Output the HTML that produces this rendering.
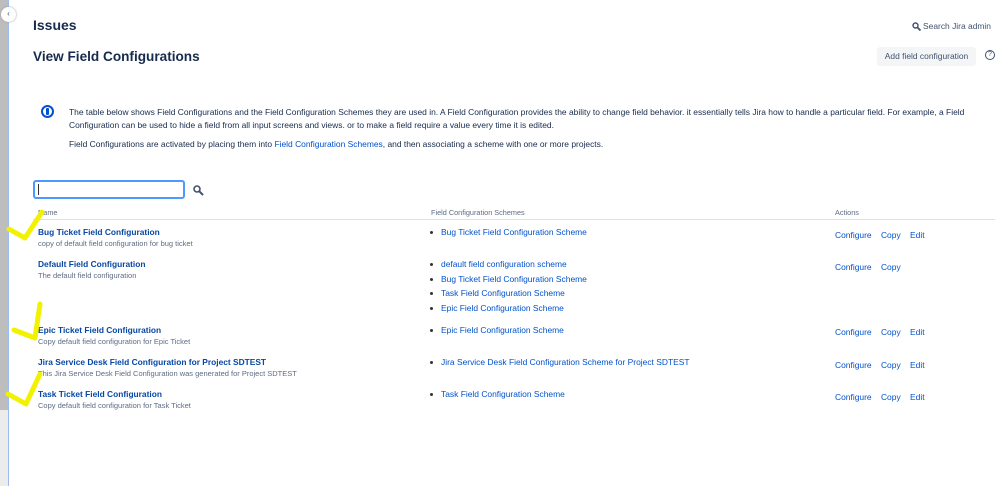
<!DOCTYPE html>
<html><head><meta charset="utf-8"><style>
*{margin:0;padding:0;box-sizing:border-box}
body{width:999px;height:486px;overflow:hidden;background:#fff;font-family:"Liberation Sans",sans-serif;color:#172b4d;position:relative}
.a{position:absolute;white-space:nowrap}
.l{color:#0052cc}
.s{font-size:8.45px}
.b{font-weight:bold;font-size:8.4px;color:#0747a6}
.d{font-size:7.5px;color:#5e6c84}
.h{font-size:7.3px;color:#5e6c84}
.bul{font-size:8.45px;color:#0052cc}
.bul:before{content:"";position:absolute;left:-11px;top:4px;width:3px;height:3px;border-radius:50%;background:#333}
</style></head><body>
<div class="a" style="left:0;top:0;width:8px;height:410px;background:#bdbdbd"></div>
<div class="a" style="left:0;top:410px;width:8px;height:76px;background:#ececec"></div>
<div class="a" style="left:8px;top:0;width:1px;height:486px;background:#9bbcf0"></div>
<div class="a" style="left:1px;top:7px;width:15px;height:15px;border-radius:50%;background:#fff;box-shadow:0 0 2px #999;font-size:8px;text-align:center;line-height:14px;color:#42526e">‹</div>
<div class="a" style="left:33px;top:17px;font-size:14px;font-weight:bold">Issues</div>
<div class="a" style="left:33px;top:49px;font-size:13.6px;font-weight:bold">View Field Configurations</div>
<svg class="a" style="left:912px;top:22px" width="9" height="9"><circle cx="3.5" cy="3.5" r="2.5" fill="none" stroke="#42526e" stroke-width="1.4"/><line x1="5.5" y1="5.5" x2="8.5" y2="8.5" stroke="#42526e" stroke-width="1.8"/></svg>
<div class="a" style="left:923px;top:21px;font-size:8.45px;color:#42526e">Search Jira admin</div>
<div class="a" style="left:877px;top:47px;width:99px;height:19px;background:#f4f5f7;border-radius:3px;font-size:8.45px;color:#42526e;text-align:center;line-height:19px">Add field configuration</div>
<div class="a" style="left:985px;top:50px;width:10px;height:10px;border:1px solid #42526e;border-radius:50%;font-size:7px;text-align:center;line-height:8px;color:#42526e">?</div>
<div class="a" style="left:41px;top:105px;width:13px;height:13px;border:2px solid #0052cc;border-radius:50%"></div>
<div class="a" style="left:46px;top:108px;width:3px;height:7px;background:#0052cc;border-radius:1px"></div>
<div class="a s" style="left:69px;top:107px">The table below shows Field Configurations and the Field Configuration Schemes they are used in. A Field Configuration provides the ability to change field behavior. it essentially tells Jira how to handle a particular field. For example, a Field</div>
<div class="a s" style="left:69px;top:120px">Configuration can be used to hide a field from all input screens and views. or to make a field require a value every time it is edited.</div>
<div class="a s" style="left:69px;top:139px">Field Configurations are activated by placing them into <span class="l">Field Configuration Schemes</span>, and then associating a scheme with one or more projects.</div>
<div class="a" style="left:33px;top:180px;width:152px;height:19px;border:2px solid #4c9aff;border-radius:3px"></div>
<div class="a" style="left:38px;top:184px;width:1px;height:11px;background:#333"></div>
<svg class="a" style="left:193px;top:185px" width="11" height="11"><circle cx="4" cy="4" r="3" fill="none" stroke="#42526e" stroke-width="1.6"/><line x1="6.3" y1="6.3" x2="10" y2="10" stroke="#42526e" stroke-width="2"/></svg>
<div class="a h" style="left:38px;top:208px">Name</div>
<div class="a h" style="left:431px;top:208px">Field Configuration Schemes</div>
<div class="a h" style="left:835px;top:208px">Actions</div>
<div class="a" style="left:33px;top:219px;width:962px;height:1px;background:#dfe1e6"></div>
<div class="a b" style="left:38px;top:227px">Bug Ticket Field Configuration</div>
<div class="a d" style="left:38px;top:239px">copy of default field configuration for bug ticket</div>
<div class="a b" style="left:38px;top:259px">Default Field Configuration</div>
<div class="a d" style="left:38px;top:271px">The default field configuration</div>
<div class="a b" style="left:38px;top:325px">Epic Ticket Field Configuration</div>
<div class="a d" style="left:38px;top:337px">Copy default field configuration for Epic Ticket</div>
<div class="a b" style="left:38px;top:357px">Jira Service Desk Field Configuration for Project SDTEST</div>
<div class="a d" style="left:38px;top:369px">This Jira Service Desk Field Configuration was generated for Project SDTEST</div>
<div class="a b" style="left:38px;top:389px">Task Ticket Field Configuration</div>
<div class="a d" style="left:38px;top:401px">Copy default field configuration for Task Ticket</div>
<div class="a bul" style="left:441px;top:227px">Bug Ticket Field Configuration Scheme</div>
<div class="a bul" style="left:441px;top:259px">default field configuration scheme</div>
<div class="a bul" style="left:441px;top:274px">Bug Ticket Field Configuration Scheme</div>
<div class="a bul" style="left:441px;top:288px">Task Field Configuration Scheme</div>
<div class="a bul" style="left:441px;top:303px">Epic Field Configuration Scheme</div>
<div class="a bul" style="left:441px;top:325px">Epic Field Configuration Scheme</div>
<div class="a bul" style="left:441px;top:357px">Jira Service Desk Field Configuration Scheme for Project SDTEST</div>
<div class="a bul" style="left:441px;top:389px">Task Field Configuration Scheme</div>
<div class="a s l" style="left:835px;top:230px">Configure &nbsp;&nbsp; Copy &nbsp;&nbsp; Edit</div>
<div class="a s l" style="left:835px;top:262px">Configure &nbsp;&nbsp; Copy</div>
<div class="a s l" style="left:835px;top:327px">Configure &nbsp;&nbsp; Copy &nbsp;&nbsp; Edit</div>
<div class="a s l" style="left:835px;top:360px">Configure &nbsp;&nbsp; Copy &nbsp;&nbsp; Edit</div>
<div class="a s l" style="left:835px;top:392px">Configure &nbsp;&nbsp; Copy &nbsp;&nbsp; Edit</div>
<svg class="a" style="left:0;top:0" width="60" height="486"><g fill="none" stroke="#f2f200" stroke-width="5" stroke-linecap="round" stroke-linejoin="round"><polyline points="9,229 25,238 42,212"/><polyline points="14,330 35,338 40,304"/><polyline points="8,394 26,404 40,374"/></g></svg>
</body></html>
